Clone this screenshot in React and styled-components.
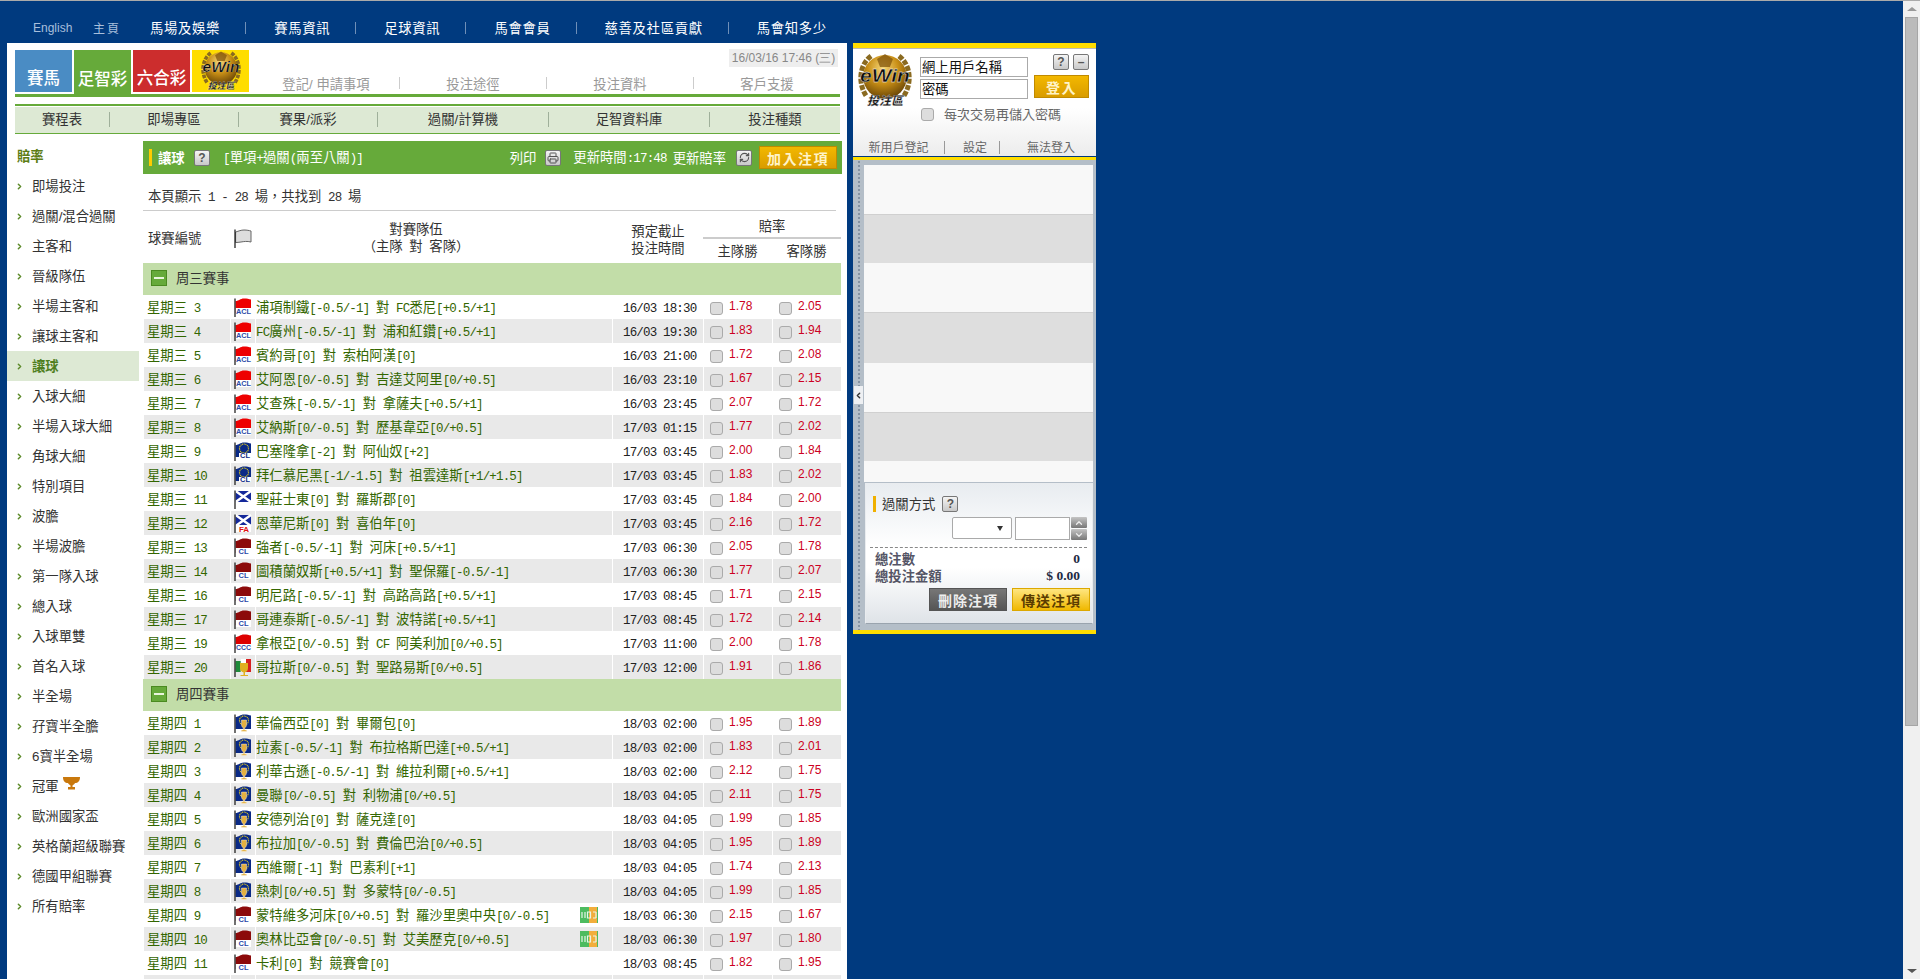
import React from "react"
import styled, { createGlobalStyle } from "styled-components"
import { Printer, RefreshCw, ChevronRight, ChevronLeft, ChevronUp, ChevronDown } from "lucide-react"

const GlobalStyle = createGlobalStyle`
  html, body {
    margin: 0;
    padding: 0;
    height: 100%;
    overflow: hidden;
    background: #003a7f;
    font-family: "Noto Sans CJK TC", "Liberation Sans", sans-serif;
    font-size: 13.33px;
    line-height: 16px;
    color: #333;
  }
  * { box-sizing: border-box; }
`

const green = "#66aa3a"

const Page = styled.div`
  display: flex;
  height: 979px;
  overflow: hidden;
  border-top: 1px solid #aaa;
`
const Viewport = styled.div`
  flex: 1;
  min-width: 0;
  overflow: hidden;
`
const Scrollbar = styled.div`
  width: 17px;
  background: #f0f0f0;
  display: flex;
  flex-direction: column;
  align-items: center;
`
const ScrollArrow = styled.div`
  height: 16px;
  width: 100%;
  display: flex;
  align-items: center;
  justify-content: center;
  margin-top: ${(p) => (p.$down ? "auto" : "0")};
  &::before {
    content: "";
    border-left: 5px solid transparent;
    border-right: 5px solid transparent;
    ${(p) => (p.$down ? "border-top: 4px solid #555;" : "border-bottom: 4px solid #999;")}
  }
`
const ScrollThumb = styled.div`
  width: 13px;
  height: 709px;
  background: #bbb;
  border: 1px solid #a6a6a6;
`

const TopNav = styled.nav`
  height: 42px;
  display: flex;
  align-items: center;
  padding: 11px 0 0 33px;
`
const LangLink = styled.span`
  font-family: "Liberation Sans", sans-serif;
  font-size: 12px;
  color: #a8bfdc;
  width: 60px;
`
const HomeLink = styled.span`
  color: #a8bfdc;
  font-size: 12px;
  letter-spacing: 2px;
  width: 57px;
`
const NavItem = styled.span`
  color: #fff;
  letter-spacing: 0.7px;
  line-height: 12px;
  padding-right: 25px;
  margin-right: 28px;
  border-right: 1px solid #6f8fb8;
  white-space: nowrap;
  &:last-child { border-right: 0; }
`

const Columns = styled.div`
  display: flex;
  align-items: flex-start;
  padding-left: 7px;
`
const Sheet = styled.div`
  width: 840px;
  background: #fff;
  padding-top: 7px;
`

const TabBar = styled.div`
  display: flex;
  height: 47px;
  margin: 0 7px 0 8px;
  border-bottom: 3px solid ${green};
`
const Tab = styled.div`
  width: 57px;
  height: ${(p) => (p.$active ? "44px" : "42px")};
  margin-right: 2px;
  background: ${(p) => p.$bg};
  color: #fff;
  font-size: 16.5px;
  font-weight: 500;
  line-height: 20px;
  padding-bottom: ${(p) => (p.$active ? "6px" : "5px")};
  display: flex;
  align-items: flex-end;
  justify-content: center;
  overflow: hidden;
`
const LogoTab = styled(Tab)`
  align-items: center;
  padding: 0;
`
const TabAside = styled.div`
  flex: 1;
  display: flex;
  flex-direction: column;
  align-items: flex-end;
`
const DateBox = styled.div`
  width: 109px;
  height: 18px;
  margin: -1px 2px 0 0;
  background: #eee;
  color: #888;
  font-family: "Liberation Sans", sans-serif;
  font-size: 12px;
  line-height: 18px;
  text-align: center;
  white-space: nowrap;
`
const ServiceLinks = styled.div`
  display: flex;
  width: 587px;
  margin-top: 10px;
`
const ServiceLink = styled.span`
  flex: 1;
  text-align: center;
  color: #999;
  line-height: 14px;
  height: 12px;
  border-right: 1px solid #ccc;
  &:last-child { border-right: 0; }
`

const SubNav = styled.div`
  display: flex;
  align-items: center;
  height: 30px;
  margin: 7px 7px 0 8px;
  background: #dde9d4;
  border-top: 2px solid ${green};
  border-bottom: 1px solid ${green};
  box-shadow: inset 0 1px 0 #fff;
`
const SubNavItem = styled.span`
  width: ${(p) => p.$w}px;
  height: 15px;
  line-height: 13px;
  text-align: center;
  color: #333;
  border-right: 1px solid #9fb09a;
  &:last-child { border-right: 0; }
`

const Content = styled.div`
  display: flex;
`
const Sidebar = styled.aside`
  width: 136px;
  flex: none;
  padding-top: 14px;
`
const SideTitle = styled.div`
  height: 23px;
  padding-left: 10px;
  color: #5d7d14;
  font-weight: 700;
`
const SideItem = styled.div`
  display: flex;
  align-items: center;
  width: 132px;
  height: 30px;
  padding-left: 8px;
  background: ${(p) => (p.$active ? "#dde9d4" : "transparent")};
  color: ${(p) => (p.$active ? "#4f7f1f" : "#333")};
  font-weight: ${(p) => (p.$active ? 700 : 400)};
  white-space: nowrap;
  svg.chev {
    margin-right: 8px;
    color: #5d8a2a;
    flex: none;
  }
`
const Main = styled.main`
  width: 699px;
  padding-top: 7px;
`
const TitleBar = styled.div`
  display: flex;
  align-items: center;
  height: 33px;
  padding: 0 5px 0 6px;
  background: ${green};
  color: #fff;
`
const YellowMark = styled.i`
  width: 3px;
  height: 17px;
  background: #ffcc00;
  margin-right: 6px;
`
const TitleName = styled.b`
  width: 36px;
  font-weight: 700;
`
const TitleNote = styled.span`
  margin-left: 13px;
`
const TitleTools = styled.div`
  margin-left: auto;
  display: flex;
  align-items: center;
`
const ToolText = styled.span`
  margin: 0 ${(p) => p.$mr || 0}px 0 ${(p) => p.$ml || 0}px;
`
const SquareButton = styled.span`
  width: 16px;
  height: 16px;
  flex: none;
  display: inline-flex;
  align-items: center;
  justify-content: center;
  margin: 0 ${(p) => p.$mr || 0}px 0 ${(p) => p.$ml || 0}px;
  background: linear-gradient(#f4f4f4, #c8c8c8);
  border: 1px solid #777;
  border-radius: 2px;
  color: #555;
  font-family: "Liberation Sans", sans-serif;
  font-size: 12px;
  font-weight: 700;
  line-height: 14px;
`
const GoldButton = styled.span`
  display: inline-flex;
  align-items: center;
  justify-content: center;
  width: ${(p) => p.$w}px;
  height: 23px;
  background: linear-gradient(#f3b800, #d99c00);
  border: 1px solid #c08a00;
  color: #fff4c8;
  font-size: 14px;
  font-weight: 700;
  letter-spacing: 1.5px;
`
const PageInfo = styled.div`
  padding: 14px 0 0 5px;
  line-height: 16px;
  border-bottom: 1px solid #ccc;
  width: 693px;
  height: 37px;
`

const gridColumns = "86px 24px 356px 90px 68px 68px"

const TableHead = styled.div`
  display: grid;
  grid-template-columns: ${gridColumns};
  column-gap: 1px;
  height: 52px;
  padding-left: 1px;
  align-items: center;
`
const HeadNumber = styled.div`
  padding: 2px 0 0 4px;
  white-space: nowrap;
`
const HeadFlag = styled.div`
  display: flex;
  padding: 2px 0 0 3px;
`
const HeadCenter = styled.div`
  text-align: center;
  line-height: 17px;
  padding: 3px ${(p) => p.$pr || 0}px 0 0;
`
const HeadOdds = styled.div`
  grid-column: span 2;
  display: grid;
  grid-template-columns: 1fr 1fr;
  text-align: center;
  height: 52px;
  grid-template-rows: 28px 1fr;
  margin-left: -1px;
`
const HeadOddsTitle = styled.div`
  grid-column: span 2;
  border-bottom: 2px solid #ccc;
  line-height: 28px;
  padding-top: 1px;
`
const HeadOddsCell = styled.div`
  line-height: 24px;
`

const GroupRow = styled.div`
  display: flex;
  align-items: center;
  height: 32px;
  padding: 0 0 2px 8px;
  background: #c2dda8;
  width: 698px;
  line-height: 14px;
`
const Collapse = styled.span`
  width: 16px;
  height: 16px;
  margin-right: 9px;
  background: ${green};
  border: 1px solid #4a8a20;
  display: flex;
  align-items: center;
  justify-content: center;
  &::before {
    content: "";
    width: 10px;
    height: 2px;
    background: #e9f5dc;
  }
`
const Row = styled.div`
  display: grid;
  grid-template-columns: ${gridColumns};
  column-gap: 1px;
  height: 24px;
  padding-left: 1px;
`
const Cell = styled.div`
  display: flex;
  align-items: center;
  background: ${(p) => (p.$even ? "#e9e9e9" : "#fff")};
  white-space: nowrap;
  overflow: hidden;
`
const NumberCell = styled(Cell)`
  padding: 2px 0 0 3px;
  color: #336600;
`
const FlagCell = styled(Cell)`
  padding-left: 3px;
`
const TeamCell = styled(Cell)`
  color: #336600;
  justify-content: space-between;
  padding: 2px 14px 0 0;
  svg { margin-top: -2px; }
`
const TimeCell = styled(Cell)`
  padding: 2px 0 0 10px;
  color: #222;
`
const OddsCell = styled(Cell)`
  padding-left: 6px;
`
const Tick = styled.input.attrs({ type: "checkbox" })`
  appearance: none;
  width: 13px;
  height: 13px;
  margin: ${(p) => (p.$flat ? "0" : "2px 6px 0 0")};
  flex: none;
  background: #ddd;
  border: 1px solid #aaa;
  border-radius: 3px;
`
const OddsValue = styled.span`
  font-family: "Liberation Sans", sans-serif;
  font-size: 12px;
  color: #cc0022;
  margin-top: -2px;
`
const Latin = styled.span`
  font-family: "Liberation Mono", monospace;
  font-size: 12.5px;
  letter-spacing: -0.83px;
  white-space: pre;
`
const Narrow = styled.span`
  font-family: "Liberation Sans", sans-serif;
  white-space: pre;
`

const Panel = styled.div`
  width: 243px;
  margin-left: 6px;
  background: #b4bec8;
  border-top: 5px solid #ffdd00;
  border-bottom: 4px solid #ffdd00;
  height: 591px;
  display: flex;
  flex-direction: column;
`
const LoginBox = styled.div`
  height: 108px;
  flex: none;
  display: flex;
  flex-direction: column;
  border-top: 1px solid #bbb;
  background: linear-gradient(#fff 55%, #ececec);
`
const LoginMain = styled.div`
  display: flex;
  padding: 3px 0 0 5px;
`
const LoginFields = styled.div`
  width: 108px;
  margin-left: 8px;
  padding-top: 5px;
  display: flex;
  flex-direction: column;
  gap: 2px;
`
const LoginInput = styled.div`
  height: 20px;
  line-height: 18px;
  background: #fff;
  border: 1px solid #aaa;
  color: #111;
  padding-left: 1px;
`
const RememberRow = styled.label`
  display: flex;
  align-items: center;
  gap: 10px;
  margin: 5px 0 0 1px;
  font-size: 13px;
  color: #666;
  white-space: nowrap;
`
const LoginActions = styled.div`
  width: 55px;
  margin-left: 6px;
  padding-top: 2px;
`
const LoginIcons = styled.div`
  display: flex;
  justify-content: flex-end;
  gap: 4px;
  margin-bottom: 5px;
`
const LoginLinks = styled.div`
  display: flex;
  align-items: center;
  height: 17px;
  margin-top: auto;
  font-size: 12px;
  color: #666;
`
const LoginLink = styled.span`
  width: ${(p) => p.$w}px;
  height: 13px;
  line-height: 11px;
  text-align: center;
  padding-left: ${(p) => p.$pl || 0}px;
  border-right: 1px solid #999;
  &:last-child { border-right: 0; }
`
const LoginRule = styled.div`
  height: 4px;
  flex: none;
  background: #ffdd00;
  border-top: 1px solid #00397f;
`
const SlipWrap = styled.div`
  flex: 1;
  display: flex;
  padding-right: 3px;
`
const Rail = styled.div`
  width: 11px;
  flex: none;
  display: flex;
  align-items: center;
  justify-content: center;
  background: radial-gradient(circle, #8492a3 1px, transparent 1.3px) center top / 4px 4px repeat-y;
`
const RailKnob = styled.span`
  display: flex;
  align-items: center;
  justify-content: center;
  width: 9px;
  height: 18px;
  background: #eef0f3;
  color: #333;
`
const SlipColumn = styled.div`
  flex: 1;
  padding-top: 5px;
`
const SlipBand = styled.div`
  height: ${(p) => p.$h}px;
  background: ${(p) => (p.$even ? "#dedede" : "#f8f8f8")};
  border-top: 1px solid ${(p) => (p.$even ? "#d0d0d0" : "#f8f8f8")};
`
const SlipBottom = styled.div`
  height: 141px;
  margin: 1px 0 0 1px;
  padding-top: 12px;
  display: flex;
  flex-direction: column;
  border: 1px solid #e9ecef;
  border-bottom-color: #9aa4ae;
  background: linear-gradient(#e8ecf0, #fff 45%, #fff 60%, #dfe3e8);
`
const SlipTitle = styled.div`
  display: flex;
  align-items: center;
  height: 16px;
  padding-left: 7px;
  color: #333;
  &::before {
    content: "";
    width: 3px;
    height: 16px;
    background: #f0b000;
    margin-right: 6px;
  }
`
const SlipControls = styled.div`
  display: flex;
  justify-content: flex-end;
  gap: 3px;
  padding-right: 5px;
  margin-top: 5px;
  height: 23px;
`
const FakeSelect = styled.div`
  width: 60px;
  height: 22px;
  background: #fff;
  border: 1px solid #aaa;
  border-radius: 2px;
  display: flex;
  align-items: center;
  justify-content: flex-end;
  padding-right: 8px;
  &::after {
    content: "";
    border-left: 3px solid transparent;
    border-right: 3px solid transparent;
    border-top: 5px solid #333;
  }
`
const FakeInput = styled.div`
  width: 55px;
  height: 23px;
  background: #fff;
  border: 1px solid #aaa;
`
const Spinner = styled.div`
  width: 16px;
  margin-left: -2px;
  display: flex;
  flex-direction: column;
  gap: 1px;
`
const SpinButton = styled.span`
  height: 11px;
  display: flex;
  align-items: center;
  justify-content: center;
  color: #eee;
  background: linear-gradient(#c4c4c4, #777);
  border-radius: 1px;
`
const DashedRule = styled.div`
  border-top: 1px dashed #888;
  margin: 7px 5px 2px 4px;
`
const TotalRow = styled.div`
  display: flex;
  justify-content: space-between;
  height: 17px;
  line-height: 17px;
  padding: 0 12px 0 9px;
  color: #556;
  font-weight: 700;
`
const TotalValue = styled.span`
  font-family: "Liberation Serif", serif;
  font-size: 13.5px;
  color: #1d2a44;
`
const SlipButtons = styled.div`
  display: flex;
  justify-content: flex-end;
  gap: 5px;
  padding-right: 2px;
  margin-top: 4px;
`
const SlipButton = styled.span`
  width: 78px;
  height: 23px;
  display: flex;
  align-items: center;
  justify-content: center;
  font-size: 14px;
  font-weight: 700;
  letter-spacing: 1px;
  color: ${(p) => (p.$dark ? "#eee" : "#5a3c00")};
  background: ${(p) => (p.$dark ? "linear-gradient(#777, #555)" : "linear-gradient(#ffe680, #f0b800)")};
  border: 1px solid ${(p) => (p.$dark ? "#555" : "#dca800")};
`

// half-width runs get the mono face, except where the site falls back to Arial
const Mixed = ({ children, narrow }) => {
  const Run = narrow ? Narrow : Latin
  return String(children)
    .split(/([\x00-\x7f]+)/)
    .map((part, i) => (i % 2 ? <Run key={i}>{part}</Run> : part))
}

const EWinLogo = ({ size = 54 }) => (
  <svg width={size} height={size * 1.07} viewBox="0 0 54 58">
    <defs>
      <radialGradient id="ball" cx="45%" cy="30%" r="70%">
        <stop offset="0" stopColor="#f5d678" />
        <stop offset="0.5" stopColor="#c98f16" />
        <stop offset="1" stopColor="#6a4606" />
      </radialGradient>
    </defs>
    <path d="M13 4C2 12-1 30 8 44M41 4c11 8 14 26 5 40" fill="none" stroke="#8a6a20" strokeWidth="5" strokeDasharray="5 1.5" />
    <circle cx="27" cy="25" r="22" fill="url(#ball)" />
    <path d="M19 7l8-5 8 5-3 8H22z" fill="#7a4e08" opacity=".7" />
    <text x="27" y="30" textAnchor="middle" fontFamily="Liberation Sans" fontSize="19" fontWeight="700" fontStyle="italic" fill="#0c0c0c" stroke="#fff" strokeWidth=".3" textLength="50" lengthAdjust="spacingAndGlyphs">eWin</text>
    <text x="27" y="53" textAnchor="middle" fontFamily="Noto Sans CJK TC" fontSize="12" fontWeight="900" fontStyle="italic" fill="#1c1c1c" stroke="#ddd" strokeWidth=".3">投注區</text>
  </svg>
)

const Pole = () => <path d="M1 1.5V20" stroke="#111" strokeWidth="1.2" />
const Wave = "M1.6 4C5 4 6 1.5 10 1.5c3 0 5 .5 7 1V16H1.6z"

const flagParts = {
  acl: { top: "#ee0000", label: "ACL", ink: "#2a4aa8" },
  clr: { top: "#8c0a0a", label: "CL", ink: "#2a4aa8" },
  ccc: { top: "#dd0000", label: "CCC", ink: "#2a4aa8" },
}

const LeagueFlag = ({ kind }) => {
  const part = flagParts[kind]
  return (
    <svg width="18" height="20" viewBox="0 0 18 20">
      {part && (
        <>
          <path d={Wave} fill={part.top} />
          <path d="M1.6 11h15.4v7H1.6z" fill="#fff" />
          <text x="9.5" y="17.3" textAnchor="middle" fontFamily="Liberation Sans" fontSize="7.5" fontWeight="700" fill={part.ink} textLength={kind === "clr" ? 10 : 15} lengthAdjust="spacingAndGlyphs">{part.label}</text>
        </>
      )}
      {(kind === "cl" || kind === "uefa") && (
        <>
          <path d={Wave} fill="#0a2a86" />
          <circle cx="10" cy="7.5" r="4.5" fill="none" stroke="#e8d020" strokeWidth="1.2" strokeDasharray="1 .7" />
          {kind === "cl" ? (
            <>
              <path d="M5 12h12v5H5z" fill="#fff" />
              <text x="11" y="17" textAnchor="middle" fontFamily="Liberation Sans" fontSize="7.5" fontWeight="700" fill="#0a2a86">CL</text>
            </>
          ) : (
            <path d="M7.5 7h5v4.5c0 2-1 3-1.800 3.200V17h2v1.500H7.300V17h2v-2.300c-.8-.2-1.800-1.200-1.800-3.200z" fill="#e4b040" stroke="#fff" strokeWidth=".4" />
          )}
        </>
      )}
      {(kind === "scot" || kind === "fa") && (
        <>
          <path d="M1.6 2h15.4v11H1.6z" fill="#14289a" />
          <path d="M1.6 2l15.4 11M17 2L1.6 13" stroke="#fff" strokeWidth="2.4" />
          {kind === "fa" && (
            <>
              <path d="M1.6 12h15.4v7H1.6z" fill="#fff" />
              <text x="10" y="18.5" textAnchor="middle" fontFamily="Liberation Sans" fontSize="8" fontWeight="700" fill="#e01010">FA</text>
            </>
          )}
        </>
      )}
      {kind === "mx" && (
        <>
          <path d="M1.6 4h5.2v11H1.6z" fill="#1f8a3a" />
          <path d="M6.8 2h5.2v13H6.8z" fill="#fff" />
          <path d="M12 2h5v13h-5z" fill="#d82020" />
          <path d="M6 6h8v5c0 3-2 4-3 4.2V18h3v1H6.5v-1h3v-2.8C8 15 6 14 6 11z" fill="#e0b020" />
        </>
      )}
      <Pole />
    </svg>
  )
}

const EmptyFlag = () => (
  <svg width="18" height="20" viewBox="0 0 18 20">
    <path d="M1.6 4C5 3 7 2 10 2s5 .5 7 1v11c-4-1-7-.5-10 0-2 .3-4 .5-5.4.5z" fill="#ddd" stroke="#666" />
    <Pole />
  </svg>
)

const TvIcon = () => (
  <svg width="18" height="16" viewBox="0 0 18 16">
    <rect width="18" height="16" fill="#4dbb5f" />
    <rect x="9" width="8" height="16" fill="#f2ae3c" />
    <path d="M2 5v6M5 5v6M7.5 5h3v6h-3zM13 5h3M13 11h3M16 5v6" fill="none" stroke="#e8f5e8" strokeWidth="1.2" />
  </svg>
)

const Trophy = () => (
  <svg width="17" height="13" viewBox="0 0 17 13" style={{ marginLeft: 4, marginTop: -5 }}>
    <path d="M0 0h17c0 4-2 6-5 6-.7 1.5-1.8 2-2.500 2.400V10h2.500v2.500H5V10h2.500V8.400C6.800 8 5.700 7.500 5 6 2 6 0 4 0 0z" fill="#c9780c" />
  </svg>
)

const sideItems = ["即場投注", "過關/混合過關", "主客和", "晉級隊伍", "半場主客和", "讓球主客和", "讓球", "入球大細", "半場入球大細", "角球大細", "特別項目", "波膽", "半場波膽", "第一隊入球", "總入球", "入球單雙", "首名入球", "半全場", "孖寶半全膽", "6寶半全場", "冠軍", "歐洲國家盃", "英格蘭超級聯賽", "德國甲組聯賽", "所有賠率"]

const wednesday = [
  ["3", "acl", "浦項制鐵[-0.5/-1] 對 FC悉尼[+0.5/+1]", "16/03 18:30", "1.78", "2.05"],
  ["4", "acl", "FC廣州[-0.5/-1] 對 浦和紅鑽[+0.5/+1]", "16/03 19:30", "1.83", "1.94"],
  ["5", "acl", "賓約哥[0] 對 索柏阿漢[0]", "16/03 21:00", "1.72", "2.08"],
  ["6", "acl", "艾阿恩[0/-0.5] 對 吉達艾阿里[0/+0.5]", "16/03 23:10", "1.67", "2.15"],
  ["7", "acl", "艾查殊[-0.5/-1] 對 拿薩夫[+0.5/+1]", "16/03 23:45", "2.07", "1.72"],
  ["8", "acl", "艾納斯[0/-0.5] 對 歷基韋亞[0/+0.5]", "17/03 01:15", "1.77", "2.02"],
  ["9", "cl", "巴塞隆拿[-2] 對 阿仙奴[+2]", "17/03 03:45", "2.00", "1.84"],
  ["10", "cl", "拜仁慕尼黑[-1/-1.5] 對 祖雲達斯[+1/+1.5]", "17/03 03:45", "1.83", "2.02"],
  ["11", "scot", "聖莊士東[0] 對 羅斯郡[0]", "17/03 03:45", "1.84", "2.00"],
  ["12", "fa", "恩華尼斯[0] 對 喜伯年[0]", "17/03 03:45", "2.16", "1.72"],
  ["13", "clr", "強者[-0.5/-1] 對 河床[+0.5/+1]", "17/03 06:30", "2.05", "1.78"],
  ["14", "clr", "圖積蘭奴斯[+0.5/+1] 對 聖保羅[-0.5/-1]", "17/03 06:30", "1.77", "2.07"],
  ["16", "clr", "明尼路[-0.5/-1] 對 高路高路[+0.5/+1]", "17/03 08:45", "1.71", "2.15"],
  ["17", "clr", "哥連泰斯[-0.5/-1] 對 波特諾[+0.5/+1]", "17/03 08:45", "1.72", "2.14"],
  ["19", "ccc", "拿根亞[0/-0.5] 對 CF 阿美利加[0/+0.5]", "17/03 11:00", "2.00", "1.78"],
  ["20", "mx", "哥拉斯[0/-0.5] 對 聖路易斯[0/+0.5]", "17/03 12:00", "1.91", "1.86"],
]

const thursday = [
  ["1", "uefa", "華倫西亞[0] 對 畢爾包[0]", "18/03 02:00", "1.95", "1.89"],
  ["2", "uefa", "拉素[-0.5/-1] 對 布拉格斯巴達[+0.5/+1]", "18/03 02:00", "1.83", "2.01"],
  ["3", "uefa", "利華古遜[-0.5/-1] 對 維拉利爾[+0.5/+1]", "18/03 02:00", "2.12", "1.75"],
  ["4", "uefa", "曼聯[0/-0.5] 對 利物浦[0/+0.5]", "18/03 04:05", "2.11", "1.75"],
  ["5", "uefa", "安德列治[0] 對 薩克達[0]", "18/03 04:05", "1.99", "1.85"],
  ["6", "uefa", "布拉加[0/-0.5] 對 費倫巴治[0/+0.5]", "18/03 04:05", "1.95", "1.89"],
  ["7", "uefa", "西維爾[-1] 對 巴素利[+1]", "18/03 04:05", "1.74", "2.13"],
  ["8", "uefa", "熱刺[0/+0.5] 對 多蒙特[0/-0.5]", "18/03 04:05", "1.99", "1.85"],
  ["9", "clr", "蒙特維多河床[0/+0.5] 對 羅沙里奧中央[0/-0.5]", "18/03 06:30", "2.15", "1.67", true],
  ["10", "clr", "奧林比亞會[0/-0.5] 對 艾美歷克[0/+0.5]", "18/03 06:30", "1.97", "1.80", true],
  ["11", "clr", "卡利[0] 對 競賽會[0]", "18/03 08:45", "1.82", "1.95"],
]

const MatchRows = ({ day, rows }) =>
  rows.map(([no, flag, teams, time, home, away, tv], i) => {
    const even = i % 2 === 1
    return (
      <Row key={no}>
        <NumberCell $even={even}>
          <span>
            <Mixed>{`${day} ${no}`}</Mixed>
          </span>
        </NumberCell>
        <FlagCell $even={even}>
          <LeagueFlag kind={flag} />
        </FlagCell>
        <TeamCell $even={even}>
          <span>
            <Mixed>{teams}</Mixed>
          </span>
          {tv && <TvIcon />}
        </TeamCell>
        <TimeCell $even={even}>
          <span>
            <Mixed>{time}</Mixed>
          </span>
        </TimeCell>
        <OddsCell $even={even}>
          <Tick />
          <OddsValue>{home}</OddsValue>
        </OddsCell>
        <OddsCell $even={even}>
          <Tick />
          <OddsValue>{away}</OddsValue>
        </OddsCell>
      </Row>
    )
  })

const App = () => (
  <Page>
    <GlobalStyle />
    <Viewport>
      <TopNav>
        <LangLink>English</LangLink>
        <HomeLink>主頁</HomeLink>
        <NavItem>馬場及娛樂</NavItem>
        <NavItem>賽馬資訊</NavItem>
        <NavItem>足球資訊</NavItem>
        <NavItem>馬會會員</NavItem>
        <NavItem>慈善及社區貢獻</NavItem>
        <NavItem>馬會知多少</NavItem>
      </TopNav>
      <Columns>
        <Sheet>
          <TabBar>
            <Tab $bg="#4a8cc4">賽馬</Tab>
            <Tab $bg={green} $active>足智彩</Tab>
            <Tab $bg="#cc2d2d">六合彩</Tab>
            <LogoTab $bg="#ffdd00">
              <EWinLogo size={40} />
            </LogoTab>
            <TabAside>
              <DateBox>16/03/16 17:46 (三)</DateBox>
              <ServiceLinks>
                <ServiceLink>
                  <Mixed narrow>登記/ 申請事項</Mixed>
                </ServiceLink>
                <ServiceLink>投注途徑</ServiceLink>
                <ServiceLink>投注資料</ServiceLink>
                <ServiceLink>客戶支援</ServiceLink>
              </ServiceLinks>
            </TabAside>
          </TabBar>
          <SubNav>
            <SubNavItem $w={95}>賽程表</SubNavItem>
            <SubNavItem $w={129}>即場專區</SubNavItem>
            <SubNavItem $w={139}>
              <Mixed narrow>賽果/派彩</Mixed>
            </SubNavItem>
            <SubNavItem $w={171}>
              <Mixed narrow>過關/計算機</Mixed>
            </SubNavItem>
            <SubNavItem $w={161}>足智資料庫</SubNavItem>
            <SubNavItem $w={130}>投注種類</SubNavItem>
          </SubNav>
          <Content>
            <Sidebar>
              <SideTitle>賠率</SideTitle>
              {sideItems.map((item) => (
                <SideItem key={item} $active={item === "讓球"}>
                  <ChevronRight className="chev" size={9} strokeWidth={4} />
                  <span>
                    <Mixed narrow>{item}</Mixed>
                  </span>
                  {item === "冠軍" && <Trophy />}
                </SideItem>
              ))}
            </Sidebar>
            <Main>
              <TitleBar>
                <YellowMark />
                <TitleName>讓球</TitleName>
                <SquareButton>?</SquareButton>
                <TitleNote>
                  <Mixed>[單項+過關(兩至八關)]</Mixed>
                </TitleNote>
                <TitleTools>
                  <ToolText>列印</ToolText>
                  <SquareButton $ml={9} $mr={12}>
                    <Printer size={12} strokeWidth={2} />
                  </SquareButton>
                  <ToolText>
                    <Mixed>更新時間:17:48</Mixed>
                  </ToolText>
                  <ToolText $ml={6}>更新賠率</ToolText>
                  <SquareButton $ml={10} $mr={7}>
                    <RefreshCw size={11} strokeWidth={2.5} />
                  </SquareButton>
                  <GoldButton $w={78}>加入注項</GoldButton>
                </TitleTools>
              </TitleBar>
              <PageInfo>
                <Mixed>本頁顯示 1 - 28 場，共找到 28 場</Mixed>
              </PageInfo>
              <TableHead>
                <HeadNumber>球賽編號</HeadNumber>
                <HeadFlag>
                  <EmptyFlag />
                </HeadFlag>
                <HeadCenter $pr={36}>
                  對賽隊伍
                  <br />
                  <Mixed>（主隊 對 客隊）</Mixed>
                </HeadCenter>
                <HeadCenter>
                  預定截止
                  <br />
                  投注時間
                </HeadCenter>
                <HeadOdds>
                  <HeadOddsTitle>賠率</HeadOddsTitle>
                  <HeadOddsCell>主隊勝</HeadOddsCell>
                  <HeadOddsCell>客隊勝</HeadOddsCell>
                </HeadOdds>
              </TableHead>
              <GroupRow>
                <Collapse />
                周三賽事
              </GroupRow>
              <MatchRows day="星期三" rows={wednesday} />
              <GroupRow>
                <Collapse />
                周四賽事
              </GroupRow>
              <MatchRows day="星期四" rows={thursday} />
              <Row>
                <Cell $even />
                <Cell $even />
                <Cell $even />
                <Cell $even />
                <Cell $even />
                <Cell $even />
              </Row>
            </Main>
          </Content>
        </Sheet>
        <Panel>
          <LoginBox>
            <LoginMain>
              <EWinLogo />
              <LoginFields>
                <LoginInput>網上用戶名稱</LoginInput>
                <LoginInput>密碼</LoginInput>
                <RememberRow>
                  <Tick $flat />
                  每次交易再儲入密碼
                </RememberRow>
              </LoginFields>
              <LoginActions>
                <LoginIcons>
                  <SquareButton>?</SquareButton>
                  <SquareButton>–</SquareButton>
                </LoginIcons>
                <GoldButton $w={55}>登入</GoldButton>
              </LoginActions>
            </LoginMain>
            <LoginLinks>
              <LoginLink $w={92}>新用戶登記</LoginLink>
              <LoginLink $w={55} $pl={6}>設定</LoginLink>
              <LoginLink $w={96} $pl={6}>無法登入</LoginLink>
            </LoginLinks>
          </LoginBox>
          <LoginRule />
          <SlipWrap>
            <Rail>
              <RailKnob>
                <ChevronLeft size={9} strokeWidth={4} />
              </RailKnob>
            </Rail>
            <SlipColumn>
              {[49, 49, 49, 51, 49, 49, 21].map((h, i) => (
                <SlipBand key={i} $h={h} $even={i % 2 === 1} />
              ))}
              <SlipBottom>
                <SlipTitle>
                  過關方式
                  <SquareButton $ml={7}>?</SquareButton>
                </SlipTitle>
                <SlipControls>
                  <FakeSelect />
                  <FakeInput />
                  <Spinner>
                    <SpinButton>
                      <ChevronUp size={10} strokeWidth={3} />
                    </SpinButton>
                    <SpinButton>
                      <ChevronDown size={10} strokeWidth={3} />
                    </SpinButton>
                  </Spinner>
                </SlipControls>
                <DashedRule />
                <TotalRow>
                  總注數
                  <TotalValue>0</TotalValue>
                </TotalRow>
                <TotalRow>
                  總投注金額
                  <TotalValue>$ 0.00</TotalValue>
                </TotalRow>
                <SlipButtons>
                  <SlipButton $dark>刪除注項</SlipButton>
                  <SlipButton>傳送注項</SlipButton>
                </SlipButtons>
              </SlipBottom>
            </SlipColumn>
          </SlipWrap>
        </Panel>
      </Columns>
    </Viewport>
    <Scrollbar>
      <ScrollArrow />
      <ScrollThumb />
      <ScrollArrow $down />
    </Scrollbar>
  </Page>
)

export default App
